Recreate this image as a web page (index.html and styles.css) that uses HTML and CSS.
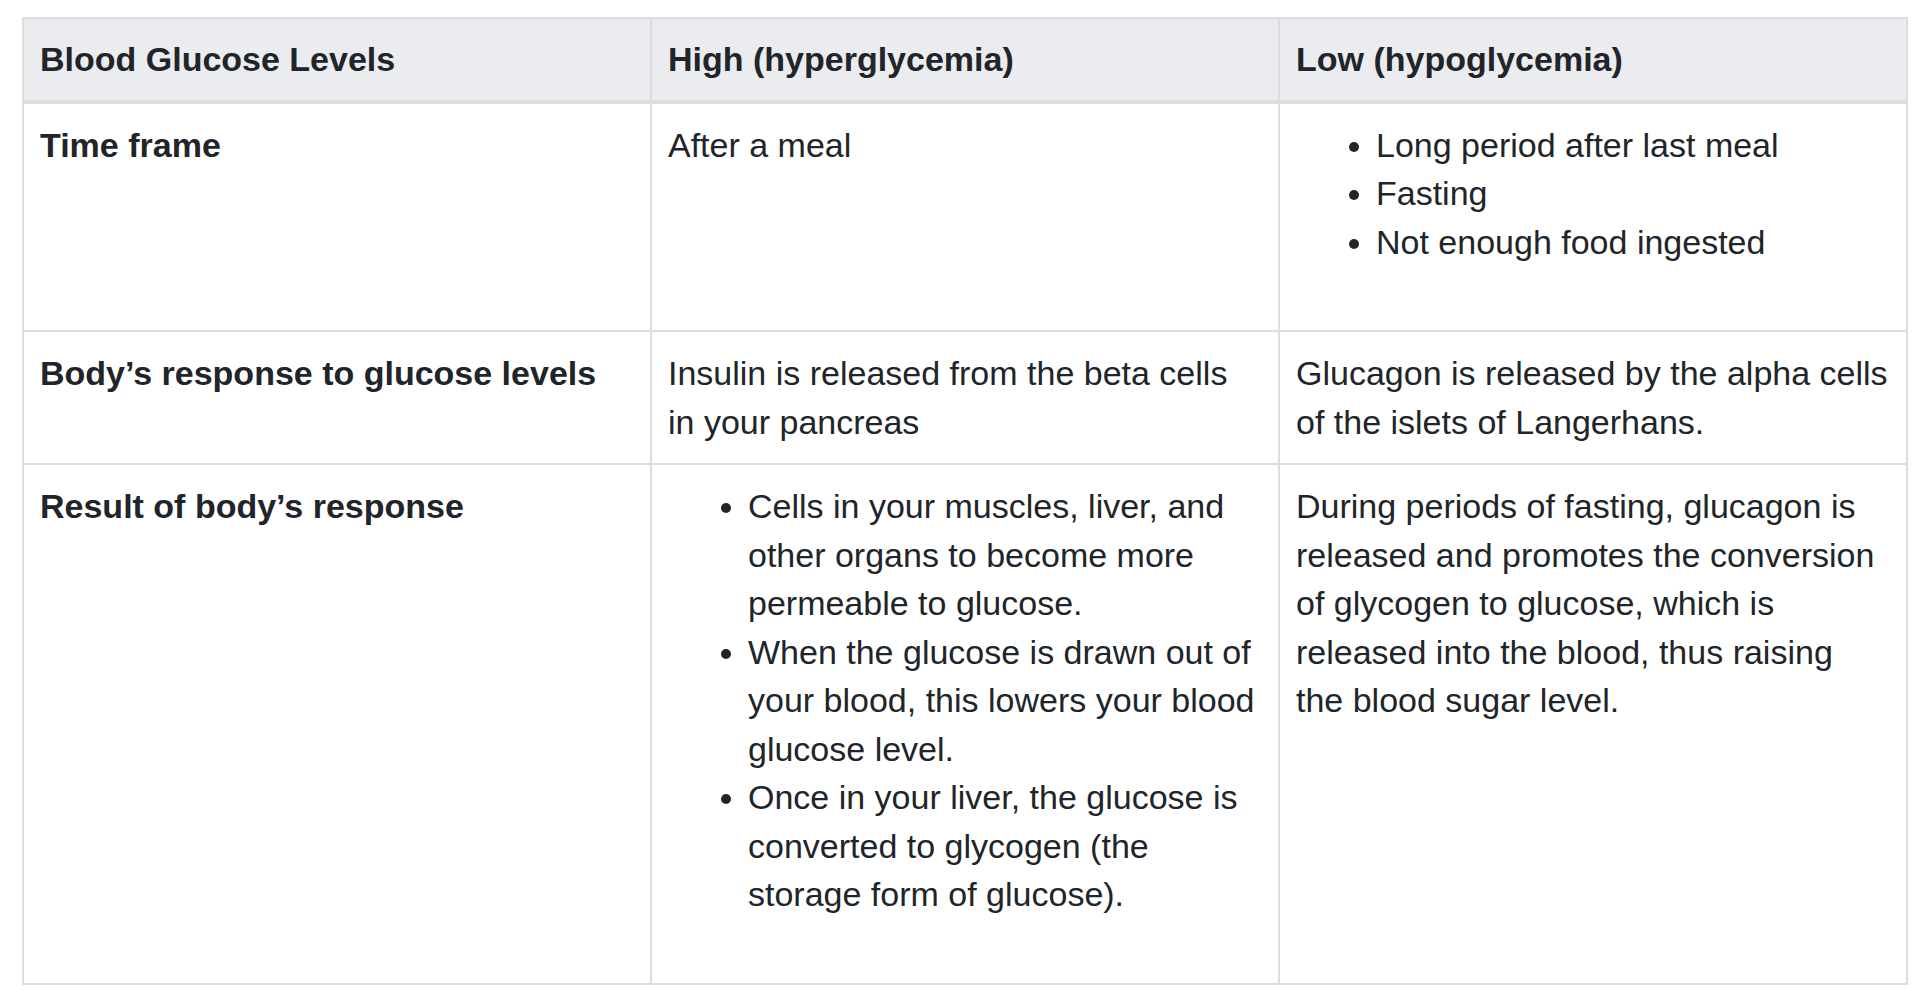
FILE: index.html
```html
<!DOCTYPE html>
<html lang="en">
<head>
<meta charset="utf-8">
<title>Blood Glucose Levels</title>
<link rel="stylesheet" href="styles.css">
</head>
<body>
<div class="wrap">
  <table class="glucose">
    <thead>
      <tr>
        <th>Blood Glucose Levels</th>
        <th>High (hyperglycemia)</th>
        <th>Low (hypoglycemia)</th>
      </tr>
    </thead>
    <tbody>
      <tr>
        <td class="label">Time frame</td>
        <td>After a meal</td>
        <td>
          <ul>
            <li>Long period after last meal</li>
            <li>Fasting</li>
            <li>Not enough food ingested</li>
          </ul>
        </td>
      </tr>
      <tr>
        <td class="label">Body’s response to glucose levels</td>
        <td>Insulin is released from the beta cells in your pancreas</td>
        <td>Glucagon is released by the alpha cells of the islets of Langerhans.</td>
      </tr>
      <tr>
        <td class="label">Result of body’s response</td>
        <td>
          <ul>
            <li>Cells in your muscles, liver, and other organs to become more permeable to glucose.</li>
            <li>When the glucose is drawn out of your blood, this lowers your blood glucose level.</li>
            <li>Once in your liver, the glucose is converted to glycogen (the storage form of glucose).</li>
          </ul>
        </td>
        <td>During periods of fasting, glucagon is released and promotes the conversion of glycogen to glucose, which is released into the blood, thus raising the blood sugar level.</td>
      </tr>
    </tbody>
  </table>
</div>
</body>
</html>
```
FILE: styles.css
```css
html, body {
  margin: 0;
  padding: 0;
  background: #ffffff;
}

body {
  font-family: "Liberation Sans", Arial, Helvetica, sans-serif;
  font-size: 34px;
  line-height: 48.5px;
  color: #212529;
}

.wrap {
  padding: 17px 18px 18px 22px;
}

.glucose {
  width: 1886px;
  table-layout: fixed;
  border-collapse: collapse;
  border: 2px solid #dddddd;
}

.glucose th,
.glucose td {
  border: 2px solid #dddddd;
  padding: 17px 18px 17px 16px;
  text-align: left;
  vertical-align: top;
}

.glucose thead th {
  background: #eaecef;
  font-weight: bold;
  padding-top: 16px;
  padding-bottom: 16px;
  border-bottom: 4px solid #dddddd;
}

.glucose td.label {
  font-weight: bold;
}

.glucose ul {
  margin: 0 0 47px 0;
  padding-left: 80px;
}
```
